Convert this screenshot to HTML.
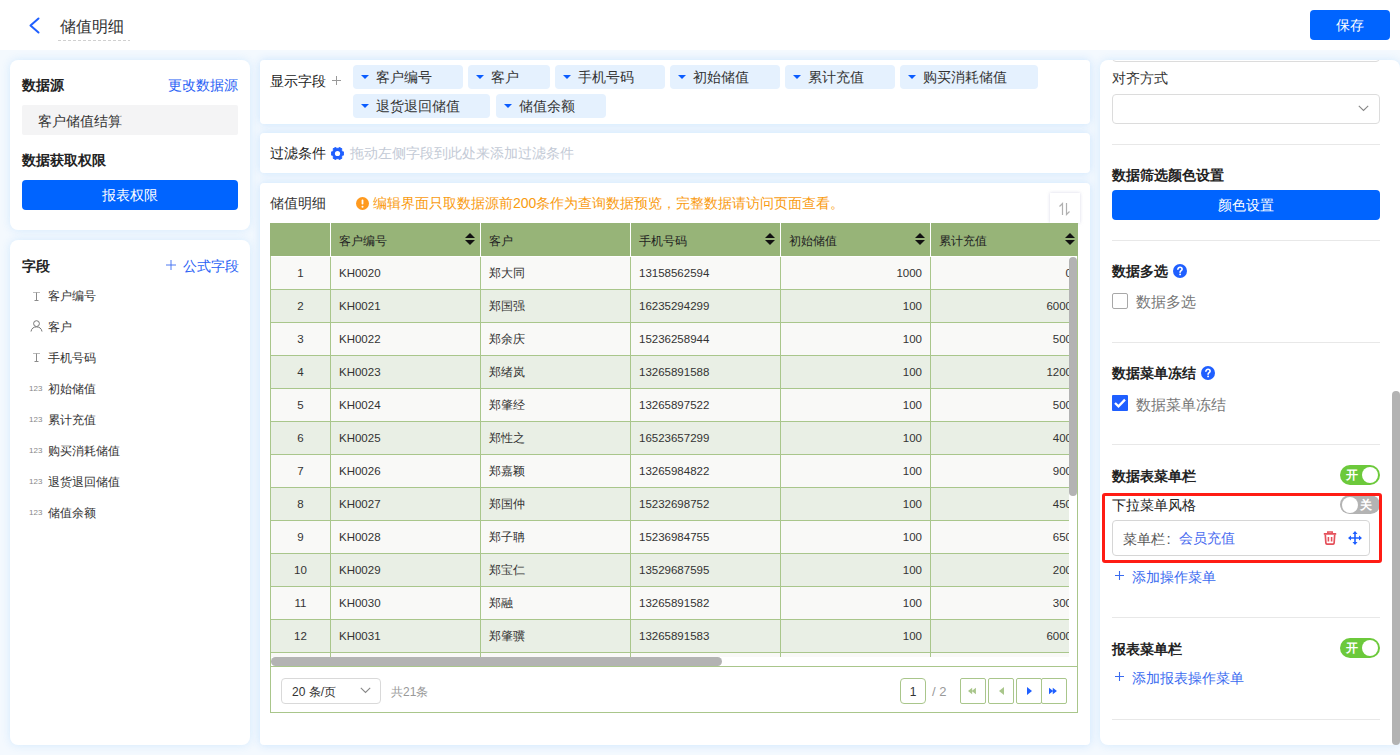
<!DOCTYPE html>
<html><head><meta charset="utf-8">
<style>
*{box-sizing:border-box;margin:0;padding:0}
html,body{width:1400px;height:755px;overflow:hidden}
body{font-family:"Liberation Sans",sans-serif;background:#F4F9FE;position:relative;color:#222;font-size:14px}
.abs{position:absolute}
.header{left:0;top:0;width:1400px;height:50px;background:#fff}
.card{position:absolute;background:#fff;border-radius:8px;box-shadow:0 0 8px rgba(205,230,254,0.85)}
.mc{border-radius:4px;box-shadow:0 0 8px rgba(198,227,254,0.95)}
.t{position:absolute;white-space:nowrap;line-height:1}
.b{font-weight:bold}
.blue{color:#2A62F5}
.fld{position:absolute;left:38px;font-size:12px;line-height:1;white-space:nowrap;color:#333}
.ico{position:absolute;left:20px;width:12px;text-align:center;color:#888}
.chip{position:absolute;height:24px;background:#E5F1FE;border-radius:4px}
.chip i{position:absolute;left:8px;top:10px;width:0;height:0;border-left:4.5px solid transparent;border-right:4.5px solid transparent;border-top:4.5px solid #0A5CFF}
.th{position:absolute;top:235px;font-size:12px;line-height:1;white-space:nowrap;color:#222}
.srt{position:absolute;top:233px;width:10px;height:12px}
.srt i{position:absolute;left:0;width:0;height:0;border-left:5px solid transparent;border-right:5px solid transparent}
.srt .u{top:0;border-bottom:5px solid #111}
.srt .d{top:7px;border-top:5px solid #111}
.tr{left:0;width:808px;height:33px}
.td{position:absolute;font-size:11.5px;line-height:1;white-space:nowrap;color:#333}
.td.cj{font-size:12px}
.hr{left:12px;width:268px;height:1px;background:#E8E8E8}
.tg{left:240px;width:40px;height:20px;border-radius:10px}
.tg.on{background:#6CC93B}.tg.off{background:#B3B3B3}
.tg i{position:absolute;top:2px;width:16px;height:16px;border-radius:50%;background:#fff}
.tg.on i{right:2px}.tg.off i{left:2px}
.tg span{position:absolute;top:4px;font-size:12px;line-height:1;color:#fff;font-weight:bold}
.tg.on span{left:6px}.tg.off span{left:20px}
.chip span{position:absolute;left:23px;top:5px;font-size:14px;line-height:1;white-space:nowrap;color:#333}
</style></head><body>
<div class="abs header">
  <svg class="abs" style="left:27px;top:16px" width="14" height="19" viewBox="0 0 14 19"><path d="M11.5 2.5 L3.5 9.5 L11.5 16.5" fill="none" stroke="#1F5FFF" stroke-width="2" stroke-linecap="round" stroke-linejoin="round"/></svg>
  <div class="t" style="left:60px;top:19px;font-size:16px;color:#333">储值明细</div>
  <div class="abs" style="left:58px;top:40px;width:72px;height:1px;background:repeating-linear-gradient(90deg,#D0D0D0 0 3px,transparent 3px 5px)"></div>
  <div class="abs" style="left:1310px;top:10px;width:80px;height:30px;background:#0064FF;border-radius:4px"></div>
  <div class="t" style="left:1336px;top:18px;color:#fff">保存</div>
</div>

<!-- left cards -->
<div class="card" style="left:10px;top:60px;width:240px;height:170px">
  <div class="t b" style="left:12px;top:18px">数据源</div>
  <div class="t blue" style="left:157.5px;top:18px">更改数据源</div>
  <div class="abs" style="left:12px;top:45px;width:216px;height:30px;background:#F4F4F5;border-radius:2px"></div>
  <div class="t" style="left:28px;top:54px;color:#333">客户储值结算</div>
  <div class="t b" style="left:12px;top:93px">数据获取权限</div>
  <div class="abs" style="left:12px;top:120px;width:216px;height:30px;background:#0064FF;border-radius:4px"></div>
  <div class="t" style="left:92px;top:128px;color:#fff">报表权限</div>
</div>
<div class="card" style="left:10px;top:240px;width:240px;height:505px">
  <div class="t b" style="left:12px;top:19px">字段</div>
  <svg class="abs" style="left:156px;top:20px" width="10" height="10" viewBox="0 0 10 10"><path d="M5 0V10M0 5H10" stroke="#3A6BF0" stroke-width="0.9"/></svg>
  <div class="t blue" style="left:173px;top:19px">公式字段</div>
  <svg class="abs" style="left:22px;top:51px" width="9" height="11" viewBox="0 0 9 11"><path d="M1 1.5H8" stroke="#BBB" stroke-width="1"/><path d="M4.5 1.5V9.5M2.5 9.5H6.5" stroke="#8A8A8A" stroke-width="1" fill="none"/></svg>
  <div class="fld" style="top:50px">客户编号</div>
  <svg class="abs" style="left:20px;top:80px" width="13" height="12" viewBox="0 0 13 12"><circle cx="6.5" cy="3.6" r="2.9" stroke="#777" stroke-width="1" fill="none"/><path d="M1 11.5C1.5 8.2 3.8 6.9 6.5 6.9S11.5 8.2 12 11.5" stroke="#777" stroke-width="1" fill="none"/></svg>
  <div class="fld" style="top:81px">客户</div>
  <svg class="abs" style="left:22px;top:112px" width="9" height="11" viewBox="0 0 9 11"><path d="M1 1.5H8" stroke="#BBB" stroke-width="1"/><path d="M4.5 1.5V9.5M2.5 9.5H6.5" stroke="#8A8A8A" stroke-width="1" fill="none"/></svg>
  <div class="fld" style="top:112px">手机号码</div>
  <div class="t" style="left:19px;top:145px;font-size:8px;color:#888">123</div>
  <div class="fld" style="top:143px">初始储值</div>
  <div class="t" style="left:19px;top:176px;font-size:8px;color:#888">123</div>
  <div class="fld" style="top:174px">累计充值</div>
  <div class="t" style="left:19px;top:207px;font-size:8px;color:#888">123</div>
  <div class="fld" style="top:205px">购买消耗储值</div>
  <div class="t" style="left:19px;top:238px;font-size:8px;color:#888">123</div>
  <div class="fld" style="top:236px">退货退回储值</div>
  <div class="t" style="left:19px;top:269px;font-size:8px;color:#888">123</div>
  <div class="fld" style="top:267px">储值余额</div>
</div>

<!-- middle -->
<div class="card mc" style="left:260px;top:60px;width:830px;height:64px">
  <div class="t" style="left:10px;top:14px;color:#222">显示字段</div>
  <svg class="abs" style="left:72px;top:16px" width="9" height="9" viewBox="0 0 9 9"><path d="M4.5 0V9M0 4.5H9" stroke="#999" stroke-width="1"/></svg>
  <div class="chip" style="left:93.2px;top:5px;width:109.4px"><i></i><span>客户编号</span></div>
  <div class="chip" style="left:208.3px;top:5px;width:81.4px"><i></i><span>客户</span></div>
  <div class="chip" style="left:295.1px;top:5px;width:109.7px"><i></i><span>手机号码</span></div>
  <div class="chip" style="left:410.1px;top:5px;width:109.5px"><i></i><span>初始储值</span></div>
  <div class="chip" style="left:525px;top:5px;width:110px"><i></i><span>累计充值</span></div>
  <div class="chip" style="left:640px;top:5px;width:138px"><i></i><span>购买消耗储值</span></div>
  <div class="chip" style="left:93.2px;top:34px;width:137px"><i></i><span>退货退回储值</span></div>
  <div class="chip" style="left:236.1px;top:34px;width:110px"><i></i><span>储值余额</span></div>
</div>
<div class="card mc" style="left:260px;top:133px;width:830px;height:40px">
  <div class="t" style="left:10px;top:13px;color:#222">过滤条件</div>
  <svg class="abs" style="left:71px;top:13.5px" width="13" height="13" viewBox="0 0 13 13"><path d="M0.19 4.93 L1.49 4.77 L2.50 3.02 L1.98 1.82 L4.71 0.25 L5.49 1.30 L7.51 1.30 L8.29 0.25 L11.02 1.82 L10.50 3.02 L11.51 4.77 L12.81 4.93 L12.81 8.07 L11.51 8.23 L10.50 9.98 L11.02 11.18 L8.29 12.75 L7.51 11.70 L5.49 11.70 L4.71 12.75 L1.98 11.18 L2.50 9.98 L1.49 8.23 L0.19 8.07Z" fill="#1F5FFF" stroke="#1F5FFF" stroke-width="0.8" stroke-linejoin="round"/><circle cx="6.5" cy="6.5" r="2.6" fill="#fff"/></svg>
  <div class="t" style="left:90px;top:13px;color:#C3CAD6">拖动左侧字段到此处来添加过滤条件</div>
</div>
<div class="card mc" style="left:260px;top:183px;width:830px;height:562px">
  <div class="t" style="left:10px;top:13px;color:#333">储值明细</div>
  <svg class="abs" style="left:96px;top:14px" width="13" height="13" viewBox="0 0 13 13"><circle cx="6.5" cy="6.5" r="6.5" fill="#FF9A1F"/><rect x="5.6" y="2.6" width="1.8" height="5" rx="0.8" fill="#fff"/><circle cx="6.5" cy="9.8" r="1" fill="#fff"/></svg>
  <div class="t" style="left:113px;top:13px;color:#F99B10">编辑界面只取数据源前200条作为查询数据预览，完整数据请访问页面查看。</div>
  <div class="abs" style="left:790px;top:10px;width:30px;height:30px;background:#fff;box-shadow:0 0 3px rgba(180,180,210,0.5)"></div>
  <svg class="abs" style="left:797px;top:19px" width="16" height="14" viewBox="0 0 16 14"><path d="M5.5 13V1.5L2.5 4.5" stroke="#B0B0B0" stroke-width="1.2" fill="none"/><path d="M9.5 1V12.5L12.5 9.5" stroke="#B0B0B0" stroke-width="1.2" fill="none"/></svg>
</div>
<!--TABLE-->
<div class="abs" style="left:270px;top:223px;width:808px;height:490px;border:1px solid #A9C68B;border-top:0;background:#fff"></div>
<div class="abs" style="left:270px;top:223px;width:808px;height:33px;background:#97B478"></div>
<div class="abs" style="left:330px;top:223px;width:1px;height:33px;background:#fff"></div>
<div class="abs" style="left:480px;top:223px;width:1px;height:33px;background:#fff"></div>
<div class="abs" style="left:630px;top:223px;width:1px;height:33px;background:#fff"></div>
<div class="abs" style="left:780px;top:223px;width:1px;height:33px;background:#fff"></div>
<div class="abs" style="left:930px;top:223px;width:1px;height:33px;background:#fff"></div>
<div class="th" style="left:339px">客户编号</div>
<div class="th" style="left:489px">客户</div>
<div class="th" style="left:639px">手机号码</div>
<div class="th" style="left:789px">初始储值</div>
<div class="th" style="left:939px">累计充值</div>
<div class="srt" style="left:465px"><i class="u"></i><i class="d"></i></div>
<div class="srt" style="left:765px"><i class="u"></i><i class="d"></i></div>
<div class="srt" style="left:915px"><i class="u"></i><i class="d"></i></div>
<div class="srt" style="left:1065px"><i class="u"></i><i class="d"></i></div>
<div class="abs" style="left:271px;top:256px;width:798px;height:401px;overflow:hidden">
<div class="abs tr" style="top:1px;height:32px;background:#F9F9F7"></div>
<div class="abs tr" style="top:34px;height:32px;background:#E9EFE5"></div>
<div class="abs tr" style="top:67px;height:32px;background:#F9F9F7"></div>
<div class="abs tr" style="top:100px;height:32px;background:#E9EFE5"></div>
<div class="abs tr" style="top:133px;height:32px;background:#F9F9F7"></div>
<div class="abs tr" style="top:166px;height:32px;background:#E9EFE5"></div>
<div class="abs tr" style="top:199px;height:32px;background:#F9F9F7"></div>
<div class="abs tr" style="top:232px;height:32px;background:#E9EFE5"></div>
<div class="abs tr" style="top:265px;height:32px;background:#F9F9F7"></div>
<div class="abs tr" style="top:298px;height:32px;background:#E9EFE5"></div>
<div class="abs tr" style="top:331px;height:32px;background:#F9F9F7"></div>
<div class="abs tr" style="top:364px;height:32px;background:#E9EFE5"></div>
<div class="abs tr" style="top:397px;height:32px;background:#F9F9F7"></div>
<div class="abs" style="left:0;top:33px;width:808px;height:1px;background:#A9C68B"></div>
<div class="abs" style="left:0;top:66px;width:808px;height:1px;background:#A9C68B"></div>
<div class="abs" style="left:0;top:99px;width:808px;height:1px;background:#A9C68B"></div>
<div class="abs" style="left:0;top:132px;width:808px;height:1px;background:#A9C68B"></div>
<div class="abs" style="left:0;top:165px;width:808px;height:1px;background:#A9C68B"></div>
<div class="abs" style="left:0;top:198px;width:808px;height:1px;background:#A9C68B"></div>
<div class="abs" style="left:0;top:231px;width:808px;height:1px;background:#A9C68B"></div>
<div class="abs" style="left:0;top:264px;width:808px;height:1px;background:#A9C68B"></div>
<div class="abs" style="left:0;top:297px;width:808px;height:1px;background:#A9C68B"></div>
<div class="abs" style="left:0;top:330px;width:808px;height:1px;background:#A9C68B"></div>
<div class="abs" style="left:0;top:363px;width:808px;height:1px;background:#A9C68B"></div>
<div class="abs" style="left:0;top:396px;width:808px;height:1px;background:#A9C68B"></div>
<div class="abs" style="left:0;top:429px;width:808px;height:1px;background:#A9C68B"></div>
<div class="abs" style="left:59px;top:1px;width:1px;height:410px;background:#A9C68B"></div>
<div class="abs" style="left:209px;top:1px;width:1px;height:410px;background:#A9C68B"></div>
<div class="abs" style="left:359px;top:1px;width:1px;height:410px;background:#A9C68B"></div>
<div class="abs" style="left:509px;top:1px;width:1px;height:410px;background:#A9C68B"></div>
<div class="abs" style="left:659px;top:1px;width:1px;height:410px;background:#A9C68B"></div>
<div class="td" style="left:0;width:59px;text-align:center;top:12px">1</div>
<div class="td" style="left:68px;top:12px">KH0020</div>
<div class="td cj" style="left:218px;top:11px">郑大同</div>
<div class="td" style="left:368px;top:12px">13158562594</div>
<div class="td" style="left:510px;width:141px;text-align:right;top:12px">1000</div>
<div class="td" style="left:660px;width:141px;text-align:right;top:12px">0</div>
<div class="td" style="left:0;width:59px;text-align:center;top:45px">2</div>
<div class="td" style="left:68px;top:45px">KH0021</div>
<div class="td cj" style="left:218px;top:44px">郑国强</div>
<div class="td" style="left:368px;top:45px">16235294299</div>
<div class="td" style="left:510px;width:141px;text-align:right;top:45px">100</div>
<div class="td" style="left:660px;width:141px;text-align:right;top:45px">6000</div>
<div class="td" style="left:0;width:59px;text-align:center;top:78px">3</div>
<div class="td" style="left:68px;top:78px">KH0022</div>
<div class="td cj" style="left:218px;top:77px">郑余庆</div>
<div class="td" style="left:368px;top:78px">15236258944</div>
<div class="td" style="left:510px;width:141px;text-align:right;top:78px">100</div>
<div class="td" style="left:660px;width:141px;text-align:right;top:78px">500</div>
<div class="td" style="left:0;width:59px;text-align:center;top:111px">4</div>
<div class="td" style="left:68px;top:111px">KH0023</div>
<div class="td cj" style="left:218px;top:110px">郑绪岚</div>
<div class="td" style="left:368px;top:111px">13265891588</div>
<div class="td" style="left:510px;width:141px;text-align:right;top:111px">100</div>
<div class="td" style="left:660px;width:141px;text-align:right;top:111px">1200</div>
<div class="td" style="left:0;width:59px;text-align:center;top:144px">5</div>
<div class="td" style="left:68px;top:144px">KH0024</div>
<div class="td cj" style="left:218px;top:143px">郑肇经</div>
<div class="td" style="left:368px;top:144px">13265897522</div>
<div class="td" style="left:510px;width:141px;text-align:right;top:144px">100</div>
<div class="td" style="left:660px;width:141px;text-align:right;top:144px">500</div>
<div class="td" style="left:0;width:59px;text-align:center;top:177px">6</div>
<div class="td" style="left:68px;top:177px">KH0025</div>
<div class="td cj" style="left:218px;top:176px">郑性之</div>
<div class="td" style="left:368px;top:177px">16523657299</div>
<div class="td" style="left:510px;width:141px;text-align:right;top:177px">100</div>
<div class="td" style="left:660px;width:141px;text-align:right;top:177px">400</div>
<div class="td" style="left:0;width:59px;text-align:center;top:210px">7</div>
<div class="td" style="left:68px;top:210px">KH0026</div>
<div class="td cj" style="left:218px;top:209px">郑嘉颖</div>
<div class="td" style="left:368px;top:210px">13265984822</div>
<div class="td" style="left:510px;width:141px;text-align:right;top:210px">100</div>
<div class="td" style="left:660px;width:141px;text-align:right;top:210px">900</div>
<div class="td" style="left:0;width:59px;text-align:center;top:243px">8</div>
<div class="td" style="left:68px;top:243px">KH0027</div>
<div class="td cj" style="left:218px;top:242px">郑国仲</div>
<div class="td" style="left:368px;top:243px">15232698752</div>
<div class="td" style="left:510px;width:141px;text-align:right;top:243px">100</div>
<div class="td" style="left:660px;width:141px;text-align:right;top:243px">450</div>
<div class="td" style="left:0;width:59px;text-align:center;top:276px">9</div>
<div class="td" style="left:68px;top:276px">KH0028</div>
<div class="td cj" style="left:218px;top:275px">郑子聃</div>
<div class="td" style="left:368px;top:276px">15236984755</div>
<div class="td" style="left:510px;width:141px;text-align:right;top:276px">100</div>
<div class="td" style="left:660px;width:141px;text-align:right;top:276px">650</div>
<div class="td" style="left:0;width:59px;text-align:center;top:309px">10</div>
<div class="td" style="left:68px;top:309px">KH0029</div>
<div class="td cj" style="left:218px;top:308px">郑宝仁</div>
<div class="td" style="left:368px;top:309px">13529687595</div>
<div class="td" style="left:510px;width:141px;text-align:right;top:309px">100</div>
<div class="td" style="left:660px;width:141px;text-align:right;top:309px">200</div>
<div class="td" style="left:0;width:59px;text-align:center;top:342px">11</div>
<div class="td" style="left:68px;top:342px">KH0030</div>
<div class="td cj" style="left:218px;top:341px">郑融</div>
<div class="td" style="left:368px;top:342px">13265891582</div>
<div class="td" style="left:510px;width:141px;text-align:right;top:342px">100</div>
<div class="td" style="left:660px;width:141px;text-align:right;top:342px">300</div>
<div class="td" style="left:0;width:59px;text-align:center;top:375px">12</div>
<div class="td" style="left:68px;top:375px">KH0031</div>
<div class="td cj" style="left:218px;top:374px">郑肇骥</div>
<div class="td" style="left:368px;top:375px">13265891583</div>
<div class="td" style="left:510px;width:141px;text-align:right;top:375px">100</div>
<div class="td" style="left:660px;width:141px;text-align:right;top:375px">6000</div>
</div>
<div class="abs" style="left:1069px;top:256px;width:8px;height:401px;background:#fff"></div>
<div class="abs" style="left:1069px;top:257px;width:8px;height:239px;background:#B3B3B3;border-radius:4px"></div>
<div class="abs" style="left:271px;top:657px;width:806px;height:9px;background:#fff"></div>
<div class="abs" style="left:271px;top:657px;width:451px;height:9px;background:#B3B3B3;border-radius:4.5px"></div>
<div class="abs" style="left:270px;top:666px;width:808px;height:1px;background:#A9C68B"></div>
<div class="abs" style="left:281px;top:678px;width:100px;height:26px;border:1px solid #D9D9D9;border-radius:4px;background:#fff"></div>
<div class="t" style="left:292px;top:685.5px;font-size:12px;color:#333">20 条/页</div>
<svg class="abs" style="left:360px;top:687px" width="11" height="7" viewBox="0 0 11 7"><path d="M0.8 0.8L5.5 5.5L10.2 0.8" stroke="#888" stroke-width="1.1" fill="none"/></svg>
<div class="t" style="left:391px;top:686px;font-size:12px;color:#999">共21条</div>
<div class="abs" style="left:900px;top:678px;width:26px;height:26px;border:1px solid #A9C68B;border-radius:4px"></div>
<div class="t" style="left:900px;width:26px;text-align:center;top:686px;font-size:12px;color:#333">1</div>
<div class="t" style="left:932px;top:685px;font-size:13px;color:#999">/ 2</div>
<div class="abs" style="left:960px;top:678px;width:26px;height:26px;border:1px solid #A9C68B;border-radius:2px"></div>
<div class="abs" style="left:988px;top:678px;width:26px;height:26px;border:1px solid #A9C68B;border-radius:2px"></div>
<div class="abs" style="left:1016px;top:678px;width:26px;height:26px;border:1px solid #A9C68B;border-radius:2px"></div>
<div class="abs" style="left:1041px;top:678px;width:26px;height:26px;border:1px solid #A9C68B;border-radius:2px"></div>
<svg class="abs" style="left:968px;top:687px" width="10" height="8" viewBox="0 0 12 8"><path d="M5 0L0 4L5 8Z M9.5 0L4.5 4L9.5 8Z" fill="#A9C68B"/></svg>
<svg class="abs" style="left:998px;top:687px" width="6" height="8" viewBox="0 0 6 8"><path d="M6 0L1 4L6 8Z" fill="#A9C68B"/></svg>
<svg class="abs" style="left:1027px;top:687px" width="6" height="8" viewBox="0 0 6 8"><path d="M0 0L5 4L0 8Z" fill="#1F5FFF"/></svg>
<svg class="abs" style="left:1049px;top:687px" width="10" height="8" viewBox="0 0 12 8"><path d="M0 0L5 4L0 8Z M4.5 0L9.5 4L4.5 8Z" fill="#1F5FFF"/></svg>
<!--/TABLE-->

<!-- right -->
<div class="card" style="left:1100px;top:60px;width:300px;height:685px;overflow:hidden">
<!--RIGHT-->
<div class="abs" style="left:12px;top:-30px;width:268px;height:32px;border:1px solid #DCDCDC;border-radius:4px"></div>
<div class="t" style="left:12px;top:11px;color:#333">对齐方式</div>
<div class="abs" style="left:12px;top:34px;width:268px;height:30px;border:1px solid #DCDCDC;border-radius:4px"></div>
<svg class="abs" style="left:258px;top:45px" width="11" height="7" viewBox="0 0 11 7"><path d="M0.8 0.8L5.5 5.5L10.2 0.8" stroke="#888" stroke-width="1.1" fill="none"/></svg>
<div class="abs hr" style="top:84px"></div>
<div class="t b" style="left:12px;top:108px">数据筛选颜色设置</div>
<div class="abs" style="left:12px;top:130px;width:268px;height:30px;background:#0064FF;border-radius:4px"></div>
<div class="t" style="left:118px;top:138px;color:#fff">颜色设置</div>
<div class="abs hr" style="top:180px"></div>
<div class="t b" style="left:12px;top:204px">数据多选</div>
<svg class="abs" style="left:73px;top:204px" width="14" height="14" viewBox="0 0 14 14"><circle cx="7" cy="7" r="7" fill="#1F5FFF"/><path d="M4.9 5.3C4.9 4 5.9 3.3 7 3.3S9.1 4 9.1 5.2C9.1 6.5 7.1 6.7 7.1 8.2" stroke="#fff" stroke-width="1.6" fill="none" stroke-linecap="round"/><circle cx="7.1" cy="10.4" r="0.95" fill="#fff"/></svg>
<div class="abs" style="left:12px;top:233px;width:16px;height:16px;border:1px solid #A8A8A8;border-radius:2px"></div>
<div class="t" style="left:35.5px;top:235px;color:#777;font-size:14.5px">数据多选</div>
<div class="abs hr" style="top:282px"></div>
<div class="t b" style="left:12px;top:306px">数据菜单冻结</div>
<svg class="abs" style="left:101px;top:306px" width="14" height="14" viewBox="0 0 14 14"><circle cx="7" cy="7" r="7" fill="#1F5FFF"/><path d="M4.9 5.3C4.9 4 5.9 3.3 7 3.3S9.1 4 9.1 5.2C9.1 6.5 7.1 6.7 7.1 8.2" stroke="#fff" stroke-width="1.6" fill="none" stroke-linecap="round"/><circle cx="7.1" cy="10.4" r="0.95" fill="#fff"/></svg>
<div class="abs" style="left:12px;top:335px;width:16px;height:16px;background:#1F5FFF;border-radius:1px"></div>
<svg class="abs" style="left:12px;top:335px" width="16" height="16" viewBox="0 0 16 16"><path d="M3 8L6.5 11.4L13 4.6" stroke="#fff" stroke-width="2.3" fill="none"/></svg>
<div class="t" style="left:35.5px;top:338px;color:#777;font-size:14.5px">数据菜单冻结</div>
<div class="abs hr" style="top:384px"></div>
<div class="t b" style="left:12px;top:409px">数据表菜单栏</div>
<div class="abs tg on" style="top:405px"><span>开</span><i></i></div>
<div class="t" style="left:12px;top:438px;color:#222">下拉菜单风格</div>
<div class="abs tg off" style="top:435px;height:19px"><i></i><span>关</span></div>
<div class="abs" style="left:12px;top:460px;width:258px;height:36px;border:1px solid #D6D6D6;border-radius:4px"></div>
<div class="t" style="left:23px;top:471px;color:#555">菜单栏<span style="position:relative;left:1.5px;font-size:15px">:</span></div>
<div class="t" style="left:79px;top:471px;color:#4A6CF0">会员充值</div>
<svg class="abs" style="left:223px;top:471px" width="14" height="14" viewBox="0 0 14 14"><path d="M4.8 2.2V1H9.2V2.2" stroke="#E5505A" stroke-width="1.5" fill="none"/><path d="M0.8 2.8H13.2" stroke="#E5505A" stroke-width="1.8"/><path d="M2.3 3.5L2.9 12.2Q3 13.1 3.9 13.1H10.1Q11 13.1 11.1 12.2L11.7 3.5" stroke="#E5505A" stroke-width="1.7" fill="none"/><path d="M5.4 6V10.4M8.6 6V10.4" stroke="#E5505A" stroke-width="1.6"/></svg>
<svg class="abs" style="left:248px;top:471px" width="14" height="14" viewBox="0 0 14 14"><path d="M7 1V13M1 7H13" stroke="#1F5FFF" stroke-width="1.6"/><path d="M7 0L4.5 3H9.5Z M7 14L4.5 11H9.5Z M0 7L3 4.5V9.5Z M14 7L11 4.5V9.5Z" fill="#1F5FFF"/></svg>
<div class="abs" style="left:2px;top:433px;width:280px;height:70px;border:3px solid #FF1C14;border-radius:3px"></div>
<svg class="abs" style="left:15px;top:511px" width="9" height="9" viewBox="0 0 9 9"><path d="M4.5 0V9M0 4.5H9" stroke="#3A6BF0" stroke-width="1.1"/></svg>
<div class="t" style="left:32px;top:510px;color:#3A6BF0">添加操作菜单</div>
<div class="abs hr" style="top:557px"></div>
<div class="t b" style="left:12px;top:582px">报表菜单栏</div>
<div class="abs tg on" style="top:578px"><span>开</span><i></i></div>
<svg class="abs" style="left:15px;top:612px" width="9" height="9" viewBox="0 0 9 9"><path d="M4.5 0V9M0 4.5H9" stroke="#3A6BF0" stroke-width="1.1"/></svg>
<div class="t" style="left:32px;top:611px;color:#3A6BF0">添加报表操作菜单</div>
<div class="abs hr" style="top:659px"></div>
<!--/RIGHT-->
</div>
<div class="abs" style="left:1392px;top:391px;width:8px;height:354px;background:#B3B3B3;border-radius:4px"></div>
</body></html>
